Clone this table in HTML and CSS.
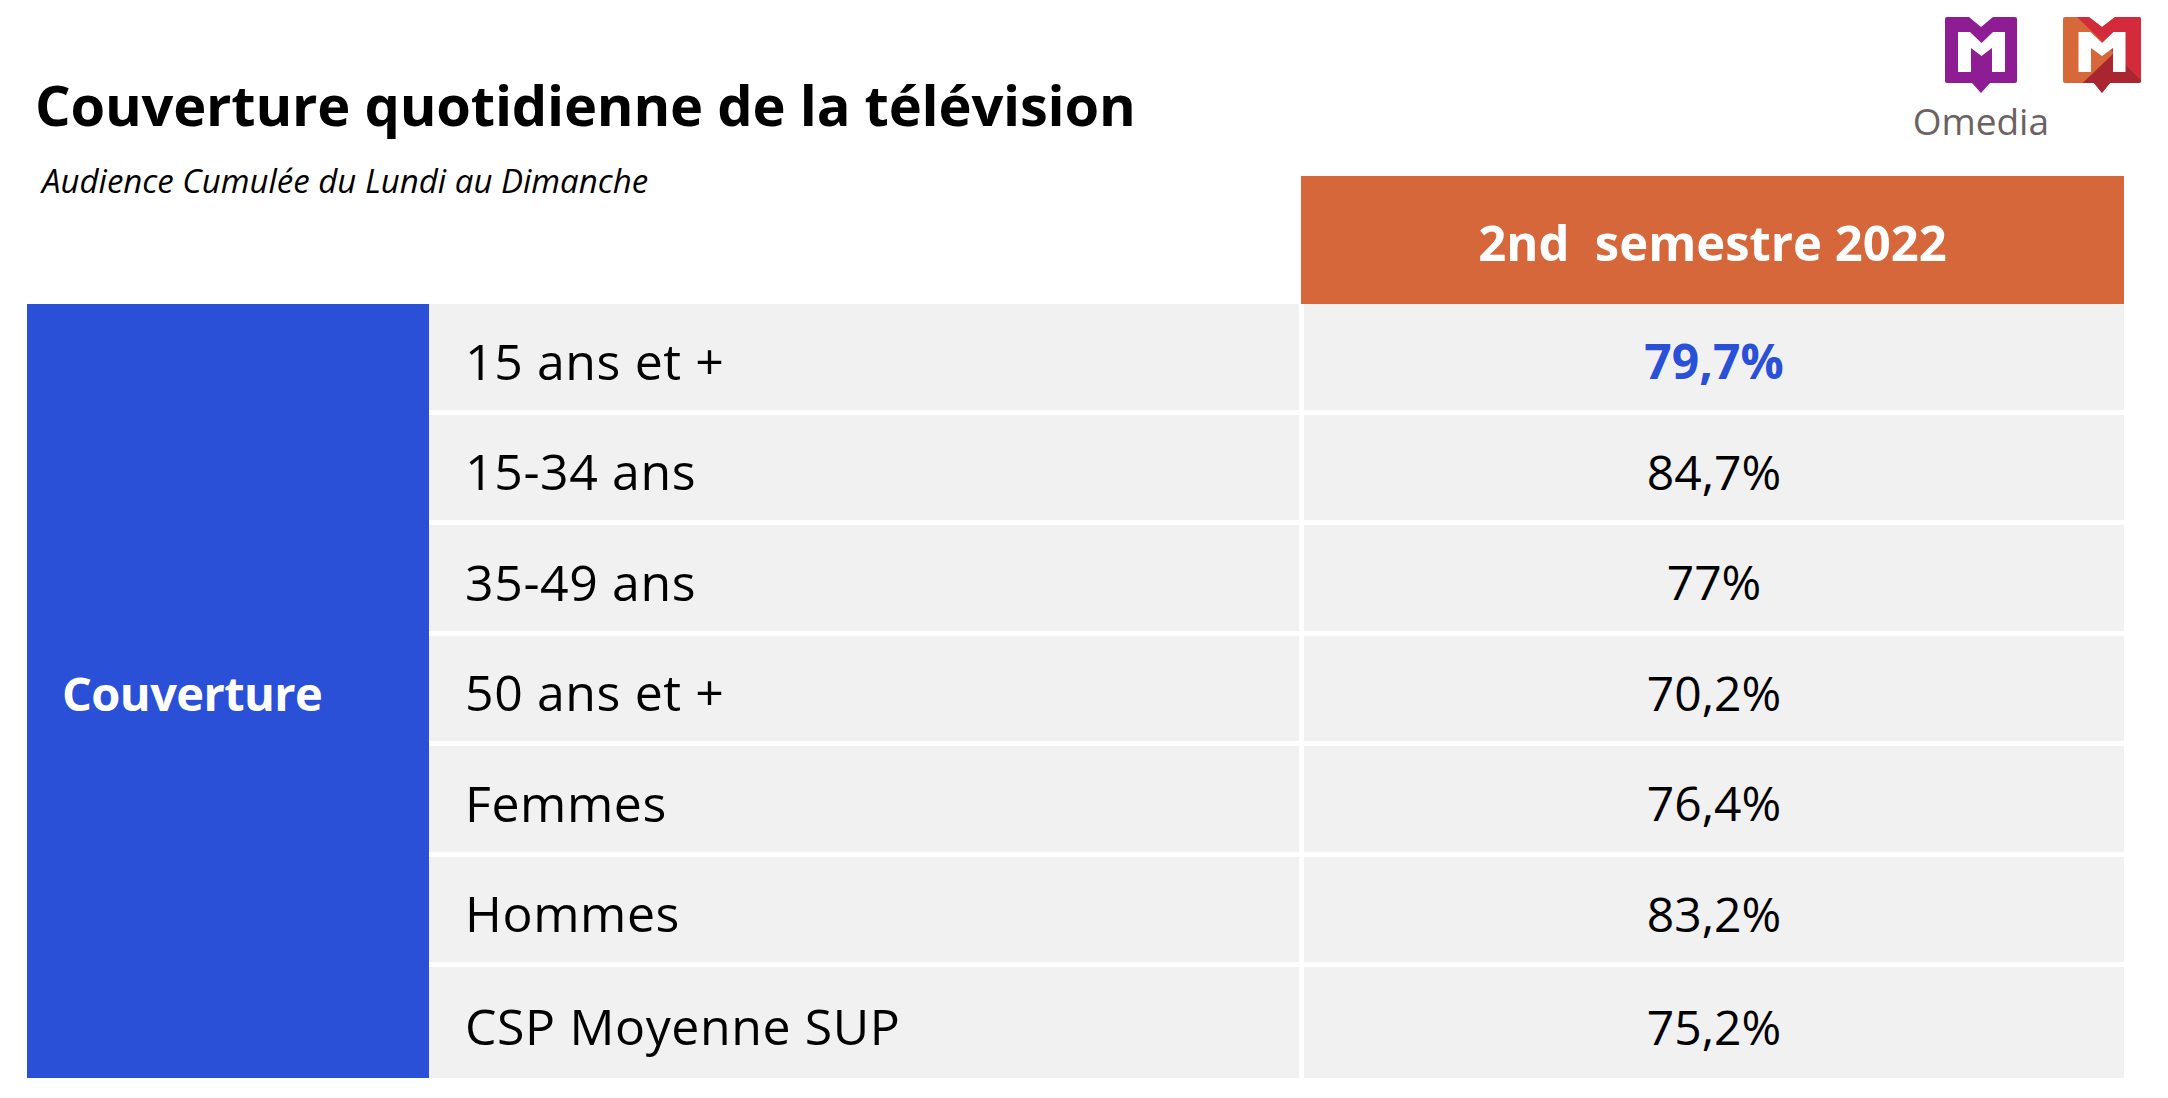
FILE: index.html
```html
<!DOCTYPE html>
<html lang="fr">
<head>
<meta charset="utf-8">
<title>Couverture quotidienne de la télévision</title>
<link rel="stylesheet" href="styles.css">
</head>
<body>
<div class="page">
  <header class="top">
    <div class="titles">
      <h1 class="title">Couverture quotidienne de la télévision</h1>
      <p class="subtitle">Audience Cumulée du Lundi au Dimanche</p>
    </div>
    <div class="logos">
      <div class="logo-omedia">
        <svg class="logo-m" width="72" height="76" viewBox="0 0 72 76">
          <path d="M2,0 H24 L36,10 L48,0 H70 Q72,0 72,2 V64 Q72,66 70,66 H45 L36,76 L27,66 H2 Q0,66 0,64 V2 Q0,0 2,0 Z" fill="#8e1c92"/>
          <polygon points="13,15 25,15 36.5,26 48,15 60,15 60,55 47,55 47,31 36.5,39 26,31 26,55 13,55" fill="#ffffff"/>
        </svg>
        <span class="omedia-text">Omedia</span>
      </div>
      <svg class="logo-m logo-red" width="78" height="76" viewBox="0 0 78 76">
        <defs>
          <clipPath id="redclip">
            <path d="M2,0 H26 L39,10 L52,0 H76 Q78,0 78,2 V64 Q78,66 76,66 H47 L39,76 L31,66 H2 Q0,66 0,64 V2 Q0,0 2,0 Z"/>
          </clipPath>
        </defs>
        <g clip-path="url(#redclip)">
          <rect x="0" y="0" width="78" height="76" fill="#d6683a"/>
          <polygon points="14,0 80,0 80,65 51,36" fill="#d42b3c"/>
          <polygon points="51,36 80,65 80,80 8,77" fill="#a92631"/>
        </g>
        <polygon points="15.5,15 27.5,15 39,26 50.5,15 62.5,15 62.5,55 50,55 50,31 39,39 28,31 28,55 15.5,55" fill="#ffffff"/>
      </svg>
    </div>
  </header>

  <section class="grid">
    <div class="head-spacer"></div>
    <div class="head">2nd&nbsp; semestre 2022</div>

    <div class="group">Couverture</div>

    <div class="label">15 ans et +</div>
    <div class="value value-main">79,7%</div>

    <div class="label">15-34 ans</div>
    <div class="value">84,7%</div>

    <div class="label">35-49 ans</div>
    <div class="value">77%</div>

    <div class="label">50 ans et +</div>
    <div class="value">70,2%</div>

    <div class="label">Femmes</div>
    <div class="value">76,4%</div>

    <div class="label">Hommes</div>
    <div class="value">83,2%</div>

    <div class="label label-last">CSP Moyenne SUP</div>
    <div class="value value-last">75,2%</div>
  </section>
</div>
</body>
</html>
```

FILE: styles.css
```css
* { box-sizing: border-box; }

html, body {
  margin: 0;
  padding: 0;
  background: #ffffff;
}

body {
  font-family: "Open Sans", "Noto Sans", sans-serif;
  color: #000000;
  width: 2168px;
  height: 1098px;
  overflow: hidden;
}

.top {
  height: 176px;
  display: flex;
  justify-content: space-between;
  align-items: flex-start;
  padding: 0 27px 0 35px;
}

.titles {
  display: flex;
  flex-direction: column;
}

.title {
  margin: 71px 0 0;
  font-size: 56px;
  line-height: 66px;
  font-weight: 700;
  letter-spacing: -0.2px;
  white-space: nowrap;
}

.subtitle {
  margin: 24px 0 0 7px;
  font-size: 33px;
  line-height: 40px;
  font-style: italic;
  font-weight: 400;
  white-space: nowrap;
}

.logos {
  margin-top: 17px;
  display: flex;
  align-items: flex-start;
  gap: 14px;
}

.logo-omedia {
  display: flex;
  flex-direction: column;
  align-items: center;
}

.logo-m { display: block; }

.omedia-text {
  margin-top: 6px;
  font-size: 37px;
  line-height: 44px;
  font-weight: 500;
  color: #6b6262;
}

.grid {
  margin-left: 27px;
  width: 2097px;
  display: grid;
  grid-template-columns: 402px 870px 825px;
  grid-template-rows: 128px repeat(7, 110.5px);
}

.head-spacer {
  grid-column: 1 / 3;
}

.head {
  grid-column: 3;
  margin-left: 2px;
  background: #d5673a;
  color: #ffffff;
  font-weight: 700;
  font-size: 49px;
  display: flex;
  align-items: center;
  justify-content: center;
  padding-top: 4px;
}

.group {
  grid-column: 1;
  grid-row: 2 / 9;
  background: #2b50d8;
  color: #ffffff;
  font-weight: 700;
  font-size: 47px;
  letter-spacing: -0.6px;
  display: flex;
  align-items: center;
  padding: 4px 0 0 35px;
}

.label,
.value {
  background: #f1f1f1;
  margin-bottom: 5px;
  font-size: 48px;
  display: flex;
  align-items: center;
  padding-top: 8px;
}

.label {
  grid-column: 2;
  padding-left: 36px;
  font-size: 50px;
  letter-spacing: 0.6px;
}

.value {
  grid-column: 3;
  margin-left: 5px;
  justify-content: center;
}

.value-main {
  color: #2b50d8;
  font-weight: 700;
}

.label-last,
.value-last {
  margin-bottom: 0;
}
```
